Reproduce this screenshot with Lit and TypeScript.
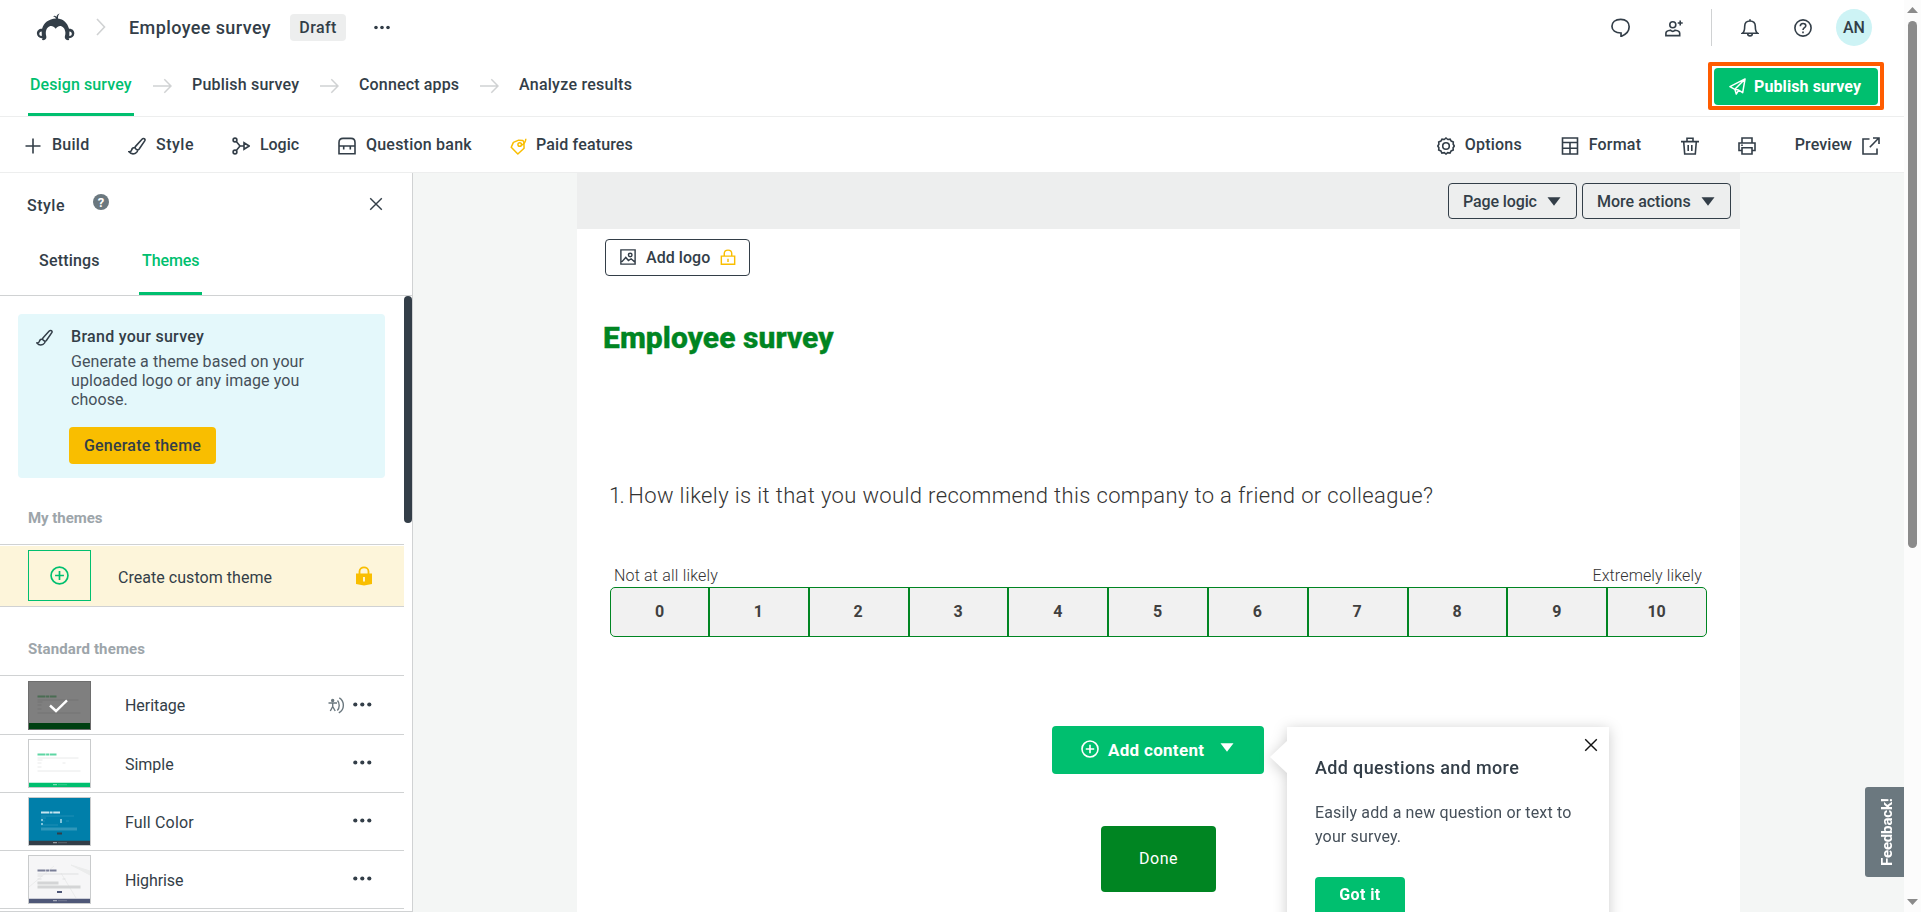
import { LitElement, html, svg, css, nothing } from "lit";
import { customElement } from "lit/decorators.js";
import { styleMap } from "lit/directives/style-map.js";
import { classMap } from "lit/directives/class-map.js";

const label = (text: string, tracking = 0) =>
  html`<span class="label" style=${styleMap({ letterSpacing: `${tracking}px` })}>${text}</span>`;

const icon = (size: number, body: unknown, view = "0 0 18 18") =>
  html`<svg class="icon" width=${size} height=${size} viewBox=${view} fill="none" stroke="currentColor" stroke-width="1.6">${body}</svg>`;

const brush = svg`<path d="M7.3 9.6 14 2.2c1.4-1.5 3.8-.2 2.7 1.7L11 12.2c-.8 1-1.800.9-2.700.2-1-.7-1.500-1.700-1-2.800zM7 10.500c-2.200 0-3.200 1.300-3.400 2.600-.2 1-1 1.600-2.600 1.700 1.600 2 4.500 2.400 6.500 1.500 1.700-.8 2.300-2.100 2.200-3.600"/>`;
const plus = svg`<path d="M9 1.500v15M1.500 9h15"/>`;
const flow = svg`<circle cx="3" cy="3" r="1.900"/><circle cx="3" cy="15" r="1.900"/><path d="M4.300 4.600 8 9l-3.700 4.500M8 9h4M12 5.800v6.400L17.200 9z"/>`;
const bank = svg`<path d="M1 16.800V5.500C1 2.800 2.500 1.400 5 1.400h8c2.500 0 4 1.400 4 4.100v11.300zM1 9h16M5.700 9v3.400M12.300 9v3.400"/>`;
const tag = svg`<path d="M1.300 9.800 3.600 4.600 9.200 2.300l4.500.4 1 1.500.2 6.600L8.300 17z" stroke-linejoin="round"/><path d="M16.800.8c-.3 3.700-2.700 6.200-5 6.900"/><circle cx="10.300" cy="6.900" r="1.900"/>`;
const gear = svg`<circle cx="9" cy="9" r="3.300"/><path d="M9 1l1.800 1.500 2.300-.4 1.100 2 2.100.9-.1 2.300L17.300 9l-1.200 1.800.1 2.200-2.100.9-1.100 2.100-2.300-.4L9 17l-1.700-1.400-2.400.4-1-2.100-2.200-.9.200-2.200L.8 9l1.100-1.700L1.700 5l2.200-.9 1.100-2 2.300.4z"/>`;
const format = svg`<path d="M1.500 1h15v16h-15zM1.500 5.500h15M1.500 11.200h15M9 5.500V17"/>`;
const trash = svg`<path d="M0 4.600h18M6 4.500V1.300h6v3.200M2.700 4.800l1 12.200h10.600l1-12.200M7.200 8v6M10.800 8v6"/>`;
const printer = svg`<path d="M4 6V1h10v5M4 13.500H1V6h16v7.500h-3M4 10.800h10V17H4zM3.200 8.300h1.600"/>`;
const external = svg`<path d="M7.500 2H1v15h14v-5.500M7.800 10.200 16.800 1M11 1h6v6"/>`;
const chat = svg`<path d="M9.500 14.200v3.300c4.500-1.800 7.700-5 7.700-9.200 0-4.300-3-7-8-7-5.200 0-8.300 2.700-8.300 6.600 0 3.800 3.200 6.300 8.600 6.300z"/>`;
const person = svg`<circle cx="7.800" cy="5.700" r="3"/><path d="M.9 16.600v-2.400c0-1.800 1.800-2.700 4.500-3 1.400 1.300 3.400 1.300 4.800 0 2.700.3 4.500 1.200 4.500 3v2.400zM15.200 1.500v5M12.700 4h5"/>`;
const bell = svg`<path d="M1.500 14.200h15c-2-1.500-2.200-3-2.200-7 0-3.300-1.800-5.200-5.300-5.200S3.700 3.900 3.700 7.200c0 4-.2 5.500-2.200 7zM9 .3V2M6.700 14.500c0 3.200 4.600 3.200 4.600 0"/>`;
const help = svg`<circle cx="9" cy="9" r="8.100"/><path d="M6.300 7.200c0-3.700 5.500-3.500 5.500-.5C11.800 8.700 9 8.800 9 11M9 12.600v1.700"/>`;
const plane = svg`<path d="M1 9.200 17 1l-2.500 14.500-4.300-2.700L7.700 17l-1.500-5zM17 1 6.200 12l4 .8" stroke-linejoin="round"/>`;
const addCircle = svg`<circle cx="9" cy="9" r="8"/><path d="M9 4.800v8.400M4.800 9h8.400"/>`;
const cross = svg`<path d="M2.500 2.500l13 13M15.500 2.500l-13 13"/>`;
const picture = svg`<path d="M1 1h16v16H1zM2 14.500l4.500-5 3 3.500 3-2 4 3.500"/><circle cx="11.500" cy="6.800" r="2"/>`;
const openLock = svg`<path d="M1.500 8h15v9.200h-15zM4.800 8V5.200c0-5.300 8.400-5.300 8.400 0V8M9 11v3.500"/>`;

const dots = html`<svg class="icon" width="19" height="5" viewBox="0 0 19 5"><circle cx="2.300" cy="2.500" r="2.100"/><circle cx="9.300" cy="2.500" r="2.100"/><circle cx="16.300" cy="2.500" r="2.100"/></svg>`;
const caret = html`<svg class="icon" width="14" height="9" viewBox="0 0 14 9"><path d="M.5.300h13L7 8.700z" fill="currentColor"/></svg>`;
const arrow = html`<svg class="arrow" width="19" height="16" viewBox="0 0 19 16" fill="none" stroke="#d0d2d3" stroke-width="1.500"><path d="M0 8h17.500M11.300 1.200 18 8l-6.700 6.800"/></svg>`;

interface Theme { name: string; tracking: number; kind: string; selected?: boolean }
const themes: Theme[] = [
  { name: "Heritage", tracking: -0.05, kind: "heritage", selected: true },
  { name: "Simple", tracking: -0.02, kind: "simple" },
  { name: "Full Color", tracking: 0.16, kind: "color" },
  { name: "Highrise", tracking: -0.1, kind: "highrise" },
];
const palette: Record<string, [string, string, string, string]> = {
  heritage: ["#7f7f7f", "#004012", "#4a6d53", "#757575"],
  simple: ["#ffffff", "#00bf6f", "#5ed6a3", "#e9eaea"],
  color: ["#007faa", "#333e48", "#c5e4ef", "#1f8fb5"],
  highrise: ["#f6f6f7", "#4f5878", "#7a7f98", "#dfe0e1"],
};

const thumb = (kind: string) => {
  const [bg, foot, head, line] = palette[kind];
  const inner = kind === "color";
  const x = inner ? 12 : 8.500;
  return html`<svg class="thumb" width="61" height="47" viewBox="0 0 61 47">
    <path d="M0 0h61v47H0z" fill=${bg}/>
    ${kind === "highrise" ? svg`<path d="M0 31 25 10M32 17l15 25M42 9l19 6v4z" stroke="#ebecec" fill="#ebecec"/>` : nothing}
    <path d="M${x} 14.500h19" stroke=${head} stroke-width="2" stroke-dasharray="8 .6 3 .6 7 9"/>
    <path d="M${x} 18h${inner ? 33 : 41}M${x} 20h5M${x} 23h4M${x + 25} 23h3M${x} 27h${inner ? 17 : 4}" stroke=${line} stroke-width="1"/>
    ${kind === "color" ? svg`<path d="M12 22h2M31 22h2M12 26h2M31 24h2" stroke="#7fc3da" stroke-width="2"/><path d="M12 31h36" stroke="#2f97ba" stroke-width="3"/><path d="M28 35.500h5" stroke="#333e48" stroke-width="2"/>` : nothing}
    ${kind === "highrise" ? svg`<path d="M8.500 27h21M8.500 31h43" stroke="#d4d5d6" stroke-width="3"/><path d="M28 36h5" stroke="#4f5878" stroke-width="2"/>` : nothing}
    ${kind === "simple" || kind === "heritage" ? svg`<path d="M8.500 31h43" stroke=${line}/>` : nothing}
    <path d=${kind === "heritage" ? "M0 41h61v6H0z" : "M0 42.700h61V47H0z"} fill=${foot}/>
    ${kind !== "heritage" ? svg`<path d="M24 44.700h4" stroke="#fff" stroke-opacity=".6"/><path d="M29 44.700h9" stroke="#fff" stroke-opacity=".2"/>` : svg`<path d="M21 23.500l6 5.500L38 18.300" fill="none" stroke="#fff" stroke-width="2.400"/>`}
  </svg>`;
};

@customElement("app-root")
export class AppRoot extends LitElement {
  static styles = css`
    :host { display: flex; width: 1921px; height: 912px; overflow: hidden; background: #fff; color: #333e48;
      font: 400 16px/20px Roboto, "Open Sans", sans-serif; }
    * { box-sizing: border-box; }
    .icon, .arrow, .thumb { display: block; flex: none; }
    .label { white-space: nowrap; }
    .app { width: 1904px; display: flex; flex-direction: column; }
    .row { display: flex; align-items: center; }
    .push { margin-left: auto; }
    .dots { fill: #333e48; }

    .top { height: 55px; padding: 0 0 1px 36px; flex: none; }
    .chevron { margin: 0 0 0 21px; display: block; }
    .name { font-size: 18px; font-weight: 500; margin-left: 23px; width: 161px; padding-top: 1px; }
    .badge { width: 56px; height: 27px; border-radius: 4px; background: #edeeee; font-weight: 500; justify-content: center; margin-top: 1px; }
    .top .dots { margin-left: 28px; transform: scale(.86); transform-origin: left; margin-top: 1px; }
    .top-icons { padding-right: 32px; margin-top: 1px; }
    .divider { width: 1px; height: 37px; background: #d0d2d3; margin: 0 29px 0 28px; }
    .gap-a { margin-left: 35px; }
    .avatar { width: 36px; height: 37px; border-radius: 50%; background: #cdf3f5; font-weight: 500; justify-content: center; margin-left: 24px; }

    .steps { height: 62px; flex: none; border-bottom: 1px solid #edeeee; align-items: stretch; padding-left: 28px; font-weight: 500; }
    .step { padding: 20px 3px 0; height: 61px; }
    .step.active { color: #00bf6f; border-bottom: 3px solid #00bf6f; width: 106px; padding-left: 2px; }
    .arrow { margin-top: 23px; }
    .s1 { width: 19px; margin-left: 19px; } .p1 { margin-left: 17px; width: 131px; }
    .p2 { margin-left: 17px; width: 124px; } .p3 { margin-left: 17px; }
    .frame { margin: 7px 20px 0 auto; width: 176px; height: 48px; border: 4px solid #ff5c00; border-radius: 2px; padding: 2px 2px 1px 2px; align-items: stretch; }
    .publish { width: 164px; height: 37px; border-radius: 4px; background: #00bf6f; color: #fff; font-weight: 700; gap: 8px; padding-left: 15px; }

    .tools { height: 56px; flex: none; border-bottom: 1px solid #edeeee; font-weight: 500; padding: 1px 24px 0 24px; }
    .tool { display: flex; align-items: center; }
    .tool .icon { position: relative; top: 1px; }
    .tool .label { margin-left: 10px; }
    .build { width: 104px; } .style { width: 104px; } .logic { width: 106px; } .qbank { width: 172px; }
    .tag { color: #f9be00; display: flex; }
    .tool .tag + .label { margin-left: 9px; }
    .opt { width: 124px; } .tool.opt .label, .tool.fmt .label { margin-left: 9px; } .opt .icon, .fmt .icon { left: -1px; }
    .fmt { width: 119px; } .bin { width: 57px; } .prt { width: 57px; }
    .tool.preview .label { margin: 0 10px 0 0; }

    .body { display: flex; flex: 1; min-height: 0; background: #f4f6f5; }
    .panel { width: 413px; border-right: 1px solid #d0d2d3; background: #fff; display: flex; flex-direction: column; flex: none; }
    .panel-head { height: 62px; padding: 3px 28px 0 27px; flex: none; font-weight: 500; }
    .panel-head .push { margin-top: -4px; }
    .q { margin: -8px 0 0 28px; width: 16px; height: 16px; border-radius: 50%; background: #6b787f; color: #fff; font-size: 13px; line-height: 17px; text-align: center; font-weight: 700; }
    .tabs { display: flex; height: 61px; flex: none; border-bottom: 1px solid #d0d2d3; padding-left: 39px; font-weight: 500; }
    .tab { padding: 16px 3px 0; height: 60px; }
    .tab.first { padding-left: 0; width: 100px; }
    .tab.active { color: #00bf6f; width: 63px; border-bottom: 3px solid #00bf6f; }
    .scroll { display: flex; flex: 1; min-height: 0; border-bottom: 1px solid #d0d2d3; }
    .list { width: 404px; overflow: hidden; }
    .bar { width: 8px; height: 227px; background: #333e48; border-radius: 4px; }
    .card { margin: 18px 0 0 18px; width: 367px; height: 164px; border-radius: 4px; background: #e4f8fb; display: flex; padding: 13px 0 0 18px; }
    .card .icon { margin: 2px 0 0; }
    .card-body { margin-left: 18px; }
    .card-title { font-weight: 500; height: 25px; }
    .card-text { line-height: 19px; margin-bottom: 18px; display: flex; flex-direction: column; color: #46505a; }
    .generate { margin-left: -2px; width: 147px; height: 37px; border-radius: 4px; background: #f9be00; font-weight: 500; justify-content: center; }
    .group { padding-left: 28px; color: #9da5aa; font-weight: 700; font-size: 15px; height: 67px; padding-top: 30px; border-bottom: 1px solid #d0d2d3; }
    .group.second { height: 69px; padding-top: 32px; }
    .custom { margin-top: 1px; height: 61px; background: #fdf5da; border-bottom: 1px solid #d0d2d3; padding: 0 32px 0 28px; }
    .custom .label { padding-top: 3px; }
    .box { width: 63px; height: 51px; border: 1px solid #00bf6f; color: #00bf6f; display: grid; place-items: center; margin: -1px 27px 0 0; }
    .theme { height: 58px; border-bottom: 1px solid #d0d2d3; padding: 0 32px 0 28px; }
    .theme.on { height: 59px; }
    .theme .dots { margin-top: -2px; }
    .thumb { border: 1px solid #c9cbcc; width: 63px; height: 49px; margin-right: 34px; }
    .on .thumb { border-color: #6e6e6e; }
    .a11y { margin-right: 8px; }
    .theme .label { padding-top: 2px; }

    .sheet { margin-left: 164px; width: 1163px; background: #fff; display: flex; flex-direction: column; position: relative; }
    .sheet-bar { height: 56px; background: #edeeee; justify-content: flex-end; gap: 5px; padding: 0 9px 0 0; flex: none; }
    .outline { height: 36px; border: 1px solid #333e48; border-radius: 4px; font-weight: 500; justify-content: space-between; padding: 1px 15px 0 14px; }
    .outline > .icon { margin-top: -1px; }
    .pl { width: 129px; } .ma { width: 149px; }
    .logo-btn { margin: 10px 0 0 28px; width: 145px; height: 37px; padding: 0 14px; justify-content: flex-start; }
    .logo-btn .label { margin: 0 10px 0 10px; }
    .lock { color: #f9be00; margin-top: -1px; }
    .title { margin: 0; padding: 44px 0 0 26px; font-size: 30px; line-height: 36px; font-weight: 800; color: #008522; height: 182px; -webkit-text-stroke: .4px #008522; }
    .question { margin: 0; padding: 24px 0 0 32px; font-size: 22px; line-height: 28px; font-weight: 300; color: #333; height: 109px; display: flex; gap: 5px; }
    .ends { display: flex; justify-content: space-between; font-weight: 300; padding: 0 38px 0 37px; color: #333; height: 21px; margin-top: -1px; }
    .scale { display: grid; grid-template-columns: 97px repeat(10, 1fr); margin: 0 33px; height: 50px; border: 1px solid #008522; border-radius: 5px; background: #f1f1f1; overflow: hidden; flex: none; }
    .cell { display: grid; place-items: center; font-weight: 700; color: #404040; }
    .cell + .cell { border-left: 2px solid #008522; padding-right: 1px; }
    .add { margin: 89px 0 0 475px; width: 212px; height: 48px; border-radius: 4px; background: #00bf6f; color: #fff; font-weight: 700; font-size: 17px; padding: 0 27px 2px 29px; flex: none; }
    .add .label { margin: 2px 16px 0 9px; }
    .add .caret { margin-top: -4px; }
    .done { margin: 52px 0 0 524px; width: 115px; height: 66px; border-radius: 4px; background: #008522; color: #fff; justify-content: center; flex: none; padding-bottom: 1px; }

    .tip { position: absolute; left: 710px; top: 554px; width: 322px; height: 230px; background: #fff; padding: 31px 0 0 28px; filter: drop-shadow(0 2px 7px rgba(0,0,0,.2)); }
    .tip-nose { position: absolute; left: -17px; top: 13px; width: 18px; height: 34px; background: #fff; clip-path: polygon(0 50%, 100% 0, 100% 100%); }
    .tip-close { position: absolute; right: 10px; top: 10px; color: #111; }
    .tip-title { font-weight: 500; font-size: 18px; height: 43px; }
    .tip-text { line-height: 24px; height: 76px; display: flex; flex-direction: column; color: #46505a; }
    .got { width: 90px; height: 44px; border-radius: 4px; background: #00bf6f; color: #fff; font-weight: 700; padding-top: 8px; text-align: center; }
    .feedback { position: absolute; left: 1865px; top: 787px; width: 39px; height: 90px; background: #6b787f; color: #fff; font-weight: 700; font-size: 15px; display: grid; place-items: center; writing-mode: vertical-rl; transform: rotate(180deg); border-radius: 0 3px 3px 0; padding-right: 5px; }

    .page-bar { width: 17px; background: #fcfcfc; display: flex; flex-direction: column; align-items: center; fill: #8b8b8b; }
    .page-bar .up { margin: 7px 0 8px; } .page-bar .down { margin: auto 0 7px; }
    .page-thumb { width: 9px; height: 527px; border-radius: 5px; background: #8b8b8b; }
  `;

  private renderTop() {
    return html`<header class="row top">
      <svg class="icon" width="39" height="28" viewBox="0 0 39 28" fill="#333e48">
        <path d="M20 5.400c-.8-1.600-1.800-2-3-2 1-.9 2.500-.8 3.400.5C20.700 2.300 21.800.9 23.700.6 22.300 1.800 22 3.300 22 5.400 27.500 6 31.500 10 33 15.700c3.500-.2 5.500 2 5.300 4.900-.1 3-2.500 4.900-5.600 4.600l.5 1.800c-2 .5-4-.5-4.300-2-.4-1.800.7-3 .5-5.500-.3-4.200-2.900-6.500-5.400-6.500-1.600 0-2.800 1-4.300 2.800-1.500-1.800-2.800-2.800-4.500-2.800-2.600 0-5.100 2.300-5.400 6.500-.2 2.500.9 3.700.5 5.500-.3 1.500-2.300 2.500-4.300 2l.5-1.800C3.300 25.500 1 23.500.9 20.600c-.1-2.900 2-5 5.200-4.900C7.700 9.900 12.500 5.800 20 5.400z"/>
        <path d="M5.700 18.400c-1.700 0-2.400 1-2.400 2.300s.9 2.300 2.500 2.300zM33.400 18.400c1.700 0 2.400 1 2.400 2.300s-.9 2.300-2.500 2.300z" fill="#fff"/>
      </svg>
      <svg class="chevron" width="10" height="18" viewBox="0 0 10 18" fill="none" stroke="#d0d2d3" stroke-width="1.600"><path d="M1 1l7.500 8L1 17"/></svg>
      <div class="name">${label("Employee survey", 0.4)}</div>
      <div class="row badge">${label("Draft", 0.4)}</div>
      <div class="dots">${dots}</div>
      <div class="row push top-icons">
        ${icon(19, chat)}<span class="gap-a">${icon(18, person)}</span>
        <div class="divider"></div>
        ${icon(18, bell)}<span class="gap-a">${icon(18, help)}</span>
        <div class="row avatar">${label("AN", -0.1)}</div>
      </div>
    </header>`;
  }

  private renderSteps() {
    return html`<nav class="row steps">
      <div class="step active">${label("Design survey", 0.1)}</div><div class="s1">${arrow}</div>
      <div class="step p1">${label("Publish survey", 0.2)}</div>${arrow}
      <div class="step p2">${label("Connect apps", 0.15)}</div>${arrow}
      <div class="step p3">${label("Analyze results", 0.26)}</div>
      <div class="row frame"><div class="row publish">${icon(17, plane)}${label("Publish survey", 0.1)}</div></div>
    </nav>`;
  }

  private renderTools() {
    return html`<div class="row tools">
      <div class="tool build">${icon(18, plus)}${label("Build", 0.25)}</div>
      <div class="tool style">${icon(18, brush)}${label("Style", 0.5)}</div>
      <div class="tool logic">${icon(18, flow)}${label("Logic", -0.05)}</div>
      <div class="tool qbank">${icon(18, bank)}${label("Question bank", 0.22)}</div>
      <div class="tool"><span class="tag">${icon(17, tag)}</span>${label("Paid features", 0.15)}</div>
      <div class="row push">
        <div class="tool opt">${icon(18, gear)}${label("Options", 0.2)}</div>
        <div class="tool fmt">${icon(18, format)}${label("Format", 0.18)}</div>
        <div class="tool bin">${icon(18, trash)}</div>
        <div class="tool prt">${icon(18, printer)}</div>
        <div class="tool preview">${label("Preview", 0.08)}${icon(18, external)}</div>
      </div>
    </div>`;
  }

  private renderPanel() {
    return html`<aside class="panel">
      <div class="row panel-head">${label("Style", 0.5)}<span class="q">?</span><span class="push">${icon(16, cross)}</span></div>
      <div class="tabs"><div class="tab first">${label("Settings", 0.2)}</div><div class="tab active">${label("Themes", -0.1)}</div></div>
      <div class="scroll">
        <div class="list">
          <div class="card">${icon(17, brush)}
            <div class="card-body">
              <div class="card-title">${label("Brand your survey", 0.28)}</div>
              <div class="card-text">${label("Generate a theme based on your", 0.1)}${label("uploaded logo or any image you", 0.07)}${label("choose.", 0.07)}</div>
              <div class="row generate">${label("Generate theme", 0.22)}</div>
            </div>
          </div>
          <div class="group">${label("My themes", -0.05)}</div>
          <div class="row custom">
            <div class="box">${icon(19, addCircle)}</div>${label("Create custom theme", 0.04)}
            <svg class="icon push" width="16" height="20" viewBox="0 0 16 20"><path d="M3.500 8V5.500c0-5.500 9-5.500 9 0V8" fill="none" stroke="#f9be00" stroke-width="1.800"/><path d="M0 7.500h16V18l-8 1.500L0 18z" fill="#f9be00"/><path d="M8 11v4.500" stroke="#fff" stroke-width="1.600"/></svg>
          </div>
          <div class="group second">${label("Standard themes", 0.13)}</div>
          ${themes.map((t) => html`<div class=${classMap({ row: true, theme: true, on: !!t.selected })}>
            ${thumb(t.kind)}${label(t.name, t.tracking)}
            <div class="row push">
              ${t.selected ? html`<svg class="a11y" width="17" height="17" viewBox="0 0 17 17" fill="none" stroke="#6b787f" stroke-width="1.400"><circle cx="4.700" cy="3.500" r="1" fill="#6b787f"/><path d="M.5 6h8.500M4.700 6v4M4.700 9.500 2.300 14M4.700 9.500 7.200 14M9.500 3.500c2.300 2.500 2.300 7.500-.2 10M11.300.8c5.500 3.500 5.500 11.800-.5 15"/></svg>` : nothing}
              <span class="dots">${dots}</span>
            </div>
          </div>`)}
        </div>
        <div class="bar"></div>
      </div>
    </aside>`;
  }

  private renderSheet() {
    return html`<main class="sheet">
      <div class="row sheet-bar">
        <div class="row outline pl">${label("Page logic", -0.12)}${caret}</div>
        <div class="row outline ma">${label("More actions", 0)}${caret}</div>
      </div>
      <div class="row outline logo-btn">${icon(16, picture)}${label("Add logo", 0.05)}<span class="lock">${icon(16, openLock)}</span></div>
      <h1 class="title">${label("Employee survey", 0.05)}</h1>
      <p class="question">${label("1.", -1.6)}${label("How likely is it that you would recommend this company to a friend or colleague?", 0.36)}</p>
      <div class="ends">${label("Not at all likely", 0.18)}${label("Extremely likely", 0.13)}</div>
      <div class="scale">${Array.from({ length: 11 }, (_, i) => html`<div class="cell">${i}</div>`)}</div>
      <div class="row add">${icon(18, addCircle)}${label("Add content", 0.3)}<span class="caret">${caret}</span></div>
      <div class="row done">${label("Done", 0.5)}</div>
      <div class="tip">
        <div class="tip-nose"></div><div class="tip-close">${icon(16, cross)}</div>
        <div class="tip-title">${label("Add questions and more", 0.35)}</div>
        <div class="tip-text">${label("Easily add a new question or text to", 0.14)}${label("your survey.", 0.15)}</div>
        <div class="got">${label("Got it", 0.4)}</div>
      </div>
    </main>`;
  }

  render() {
    return html`<div class="app">
        ${this.renderTop()}${this.renderSteps()}${this.renderTools()}
        <div class="body">${this.renderPanel()}${this.renderSheet()}</div>
      </div>
      <div class="page-bar">
        <svg class="up" width="11" height="6" viewBox="0 0 11 6"><path d="M5.500 0 11 6H0z"/></svg>
        <div class="page-thumb"></div>
        <svg class="down" width="11" height="6" viewBox="0 0 11 6"><path d="M5.500 6 11 0H0z"/></svg>
      </div>
      <div class="feedback">${label("Feedback!", -0.15)}</div>`;
  }
}
